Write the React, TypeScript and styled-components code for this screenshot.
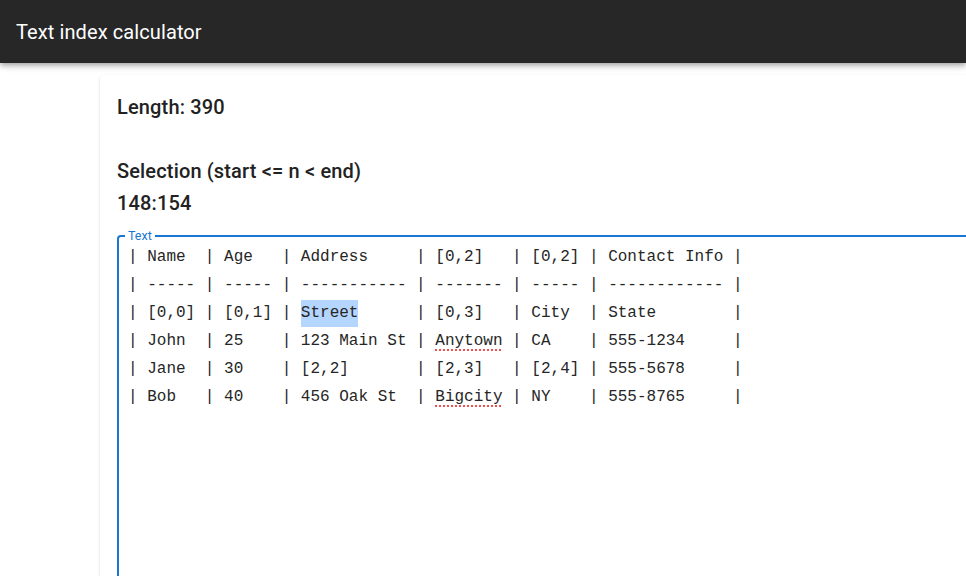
import React from 'react';
import styled, { createGlobalStyle } from 'styled-components';

type Cell = { t: string; sel?: boolean; typo?: boolean };

const widths = [5, 5, 11, 7, 5, 12];

const rows: Cell[][] = [
    [{ t: 'Name' }, { t: 'Age' }, { t: 'Address' }, { t: '[0,2]' }, { t: '[0,2]' }, { t: 'Contact Info' }],
    [{ t: '-----' }, { t: '-----' }, { t: '-----------' }, { t: '-------' }, { t: '-----' }, { t: '------------' }],
    [{ t: '[0,0]' }, { t: '[0,1]' }, { t: 'Street', sel: true }, { t: '[0,3]' }, { t: 'City' }, { t: 'State' }],
    [{ t: 'John' }, { t: '25' }, { t: '123 Main St' }, { t: 'Anytown', typo: true }, { t: 'CA' }, { t: '555-1234' }],
    [{ t: 'Jane' }, { t: '30' }, { t: '[2,2]' }, { t: '[2,3]' }, { t: '[2,4]' }, { t: '555-5678' }],
    [{ t: 'Bob' }, { t: '40' }, { t: '456 Oak St' }, { t: 'Bigcity', typo: true }, { t: 'NY' }, { t: '555-8765' }],
];

const GlobalStyle = createGlobalStyle`
    body {
        margin: 0;
        background: #fff;
        font-family: Roboto, 'Liberation Sans', sans-serif;
        color: rgba(0, 0, 0, 0.87);
        overflow: hidden;
    }
`;

const App = () => {
    return (
        <Page>
            <GlobalStyle />
            <AppBar>
                <AppTitle>Text index calculator</AppTitle>
            </AppBar>
            <Main>
                <Card>
                    <Heading>Length: 390</Heading>
                    <Heading $gap>Selection (start &lt;= n &lt; end)</Heading>
                    <Heading>148:154</Heading>
                    <Field>
                        <Label>Text</Label>
                        <TextBox>
                            {rows.map((row, i) => (
                                <Line key={i}>
                                    {'| '}
                                    {row.map((cell, j) => (
                                        <React.Fragment key={j}>
                                            {cell.sel ? (
                                                <Selected>{cell.t}</Selected>
                                            ) : cell.typo ? (
                                                <Typo>{cell.t}</Typo>
                                            ) : (
                                                cell.t
                                            )}
                                            {' '.repeat(widths[j] - cell.t.length)}
                                            {j < row.length - 1 ? ' | ' : ' |'}
                                        </React.Fragment>
                                    ))}
                                </Line>
                            ))}
                        </TextBox>
                    </Field>
                </Card>
            </Main>
        </Page>
    );
};

export default App;

const Page = styled.div`
    width: 966px;
    height: 576px;
    overflow: hidden;
    display: flex;
    flex-direction: column;
`;

const AppBar = styled.header`
    height: 63px;
    flex-shrink: 0;
    display: flex;
    align-items: center;
    padding: 0 16px;
    background: #272727;
    box-shadow: 0px 2px 4px -1px rgba(0, 0, 0, 0.2), 0px 4px 5px 0px rgba(0, 0, 0, 0.14),
        0px 1px 10px 0px rgba(0, 0, 0, 0.12);
    position: relative;
    z-index: 1;
`;

const AppTitle = styled.h1`
    margin: 0;
    font-size: 20px;
    font-weight: 400;
    color: #fff;
    letter-spacing: 0.1px;
`;

const Main = styled.main`
    padding: 12px 0 0 100px;
`;

const Card = styled.section`
    width: 1000px;
    height: 700px;
    padding: 16px 16px 16px 17px;
    background: #fff;
    border-radius: 4px;
    box-shadow: 0px 2px 1px -1px rgba(0, 0, 0, 0.2), 0px 1px 1px 0px rgba(0, 0, 0, 0.14),
        0px 1px 3px 0px rgba(0, 0, 0, 0.12);
`;

const Heading = styled.h6<{ $gap?: boolean }>`
    margin: ${(p) => (p.$gap ? '32px 0 0' : '0')};
    font-size: 20px;
    font-weight: 500;
    line-height: 32px;
    letter-spacing: 0.15px;
    color: #222;
`;

const Field = styled.fieldset`
    margin: 11px 0 0;
    padding: 0 0 0 9px;
    min-width: 0;
    border: 2px solid #1976d2;
    border-radius: 4px;
`;

const Label = styled.legend`
    margin-left: -3px;
    padding: 0 3px;
    font-size: 12.5px;
    line-height: 12px;
    color: #1976d2;
`;

const TextBox = styled.div`
    height: 420px;
    padding-top: 1px;
    font-family: 'Liberation Mono', 'Courier New', monospace;
    font-size: 16px;
    line-height: 28px;
    color: #262626;
    white-space: pre;
`;

const Line = styled.div`
    height: 28px;
`;

const Selected = styled.span`
    background: #b4d5fe;
    display: inline-block;
    line-height: 27px;
`;

const Typo = styled.span`
    text-decoration: underline dotted #f0504f;
    text-decoration-thickness: 2px;
    text-underline-offset: 4px;
`;
